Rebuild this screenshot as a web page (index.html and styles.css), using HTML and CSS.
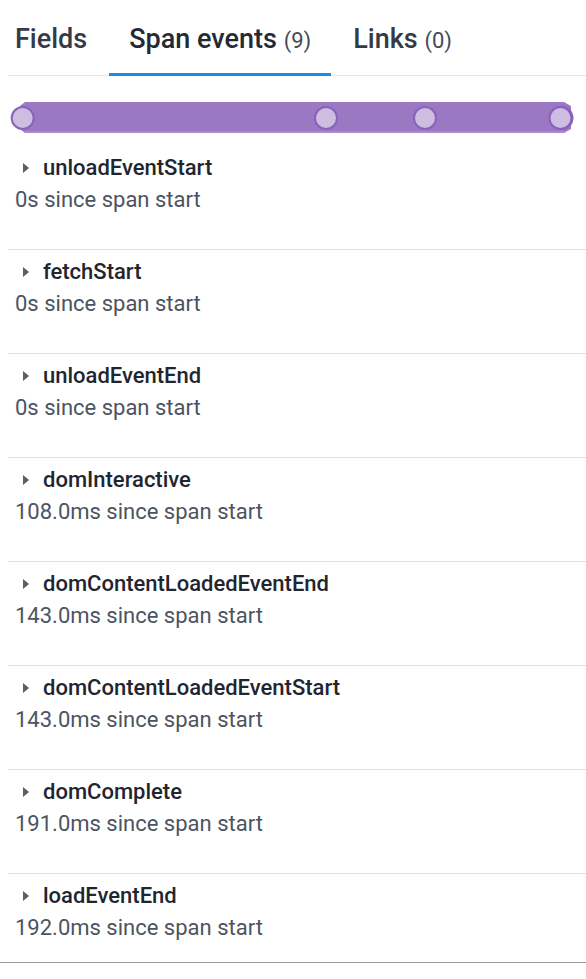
FILE: index.html
```html
<!DOCTYPE html>
<html>
<head>
<meta charset="utf-8">
<link rel="stylesheet" href="styles.css">
</head>
<body>
<div class="panel">
  <div class="content">
    <div class="tabs">
      <div class="tab first">Fields</div>
      <div class="tab active">Span events <span class="count">(9)</span></div>
      <div class="tab">Links <span class="count">(0)</span></div>
    </div>
    <div class="timeline">
      <svg width="578" height="70" viewBox="0 0 578 70">
        <path d="M12 30 L17 26 L556 26 L563 30 L563 53 L556 57 L17 57 L12 53 Z" fill="#9b78c2"/>
        <rect x="17" y="55" width="540" height="2" fill="#a98ccb"/>
        <circle cx="14.7" cy="42" r="11" fill="#cdbde0" stroke="#8a62bc" stroke-width="2"/>
        <circle cx="318" cy="42" r="11" fill="#cdbde0" stroke="#8a62bc" stroke-width="2"/>
        <circle cx="417" cy="42" r="11" fill="#cdbde0" stroke="#8a62bc" stroke-width="2"/>
        <circle cx="553.5" cy="42" r="11" fill="#cdbde0" stroke="#8a62bc" stroke-width="2"/>
        <circle cx="552.5" cy="42" r="11" fill="#cdbde0" stroke="#8a62bc" stroke-width="2"/>
      </svg>
    </div>
    <ul class="events">
      <li class="event"><div class="title"><span class="caret"></span>unloadEventStart</div><div class="sub">0s since span start</div></li>
      <li class="event"><div class="title"><span class="caret"></span>fetchStart</div><div class="sub">0s since span start</div></li>
      <li class="event"><div class="title"><span class="caret"></span>unloadEventEnd</div><div class="sub">0s since span start</div></li>
      <li class="event"><div class="title"><span class="caret"></span>domInteractive</div><div class="sub">108.0ms since span start</div></li>
      <li class="event"><div class="title"><span class="caret"></span>domContentLoadedEventEnd</div><div class="sub">143.0ms since span start</div></li>
      <li class="event"><div class="title"><span class="caret"></span>domContentLoadedEventStart</div><div class="sub">143.0ms since span start</div></li>
      <li class="event"><div class="title"><span class="caret"></span>domComplete</div><div class="sub">191.0ms since span start</div></li>
      <li class="event last"><div class="title"><span class="caret"></span>loadEventEnd</div><div class="sub">192.0ms since span start</div></li>
    </ul>
  </div>
</div>
</body>
</html>
```
FILE: styles.css
```css
* { box-sizing: border-box; }
html, body { margin: 0; padding: 0; background: #fff; }
body { font-family: Roboto, "Liberation Sans", sans-serif; }
.panel {
  width: 586px;
  height: 963px;
  overflow: hidden;
  border-bottom: 1px solid #9c9c9f;
}
.content { padding-left: 8px; }
.tabs {
  display: flex;
  gap: 2px;
  border-bottom: 1px solid #e3e5e9;
  height: 76px;
}
.tab {
  padding: 25px 20px 0 20px;
  height: 76px;
  font-size: 27px;
  line-height: 28px;
  font-weight: 500;
  color: #343b46;
  white-space: nowrap;
  border-bottom: 3px solid transparent;
}
.tab.first { padding-left: 7px; }
.tab.active { border-bottom-color: #1a8ce3; color: #232a35; }
.count { font-weight: 400; font-size: 22px; color: #444b56; }
.timeline { height: 70px; }
.timeline svg { display: block; }
.events { list-style: none; margin: 0; padding: 0; }
.event {
  padding: 9px 0 37px 7px;
  border-bottom: 1px solid #dcdfe6;
}
.event.last { border-bottom: none; }
.title {
  display: flex;
  align-items: center;
  font-size: 22px;
  line-height: 25px;
  font-weight: 500;
  color: #1f2630;
}
.caret {
  width: 0; height: 0;
  margin-left: 8px;
  margin-right: 14px;
  border-top: 5px solid transparent;
  border-bottom: 5px solid transparent;
  border-left: 6px solid #5a6069;
}
.sub {
  margin-top: 7px;
  font-size: 22px;
  line-height: 25px;
  color: #4c5461;
}
```
